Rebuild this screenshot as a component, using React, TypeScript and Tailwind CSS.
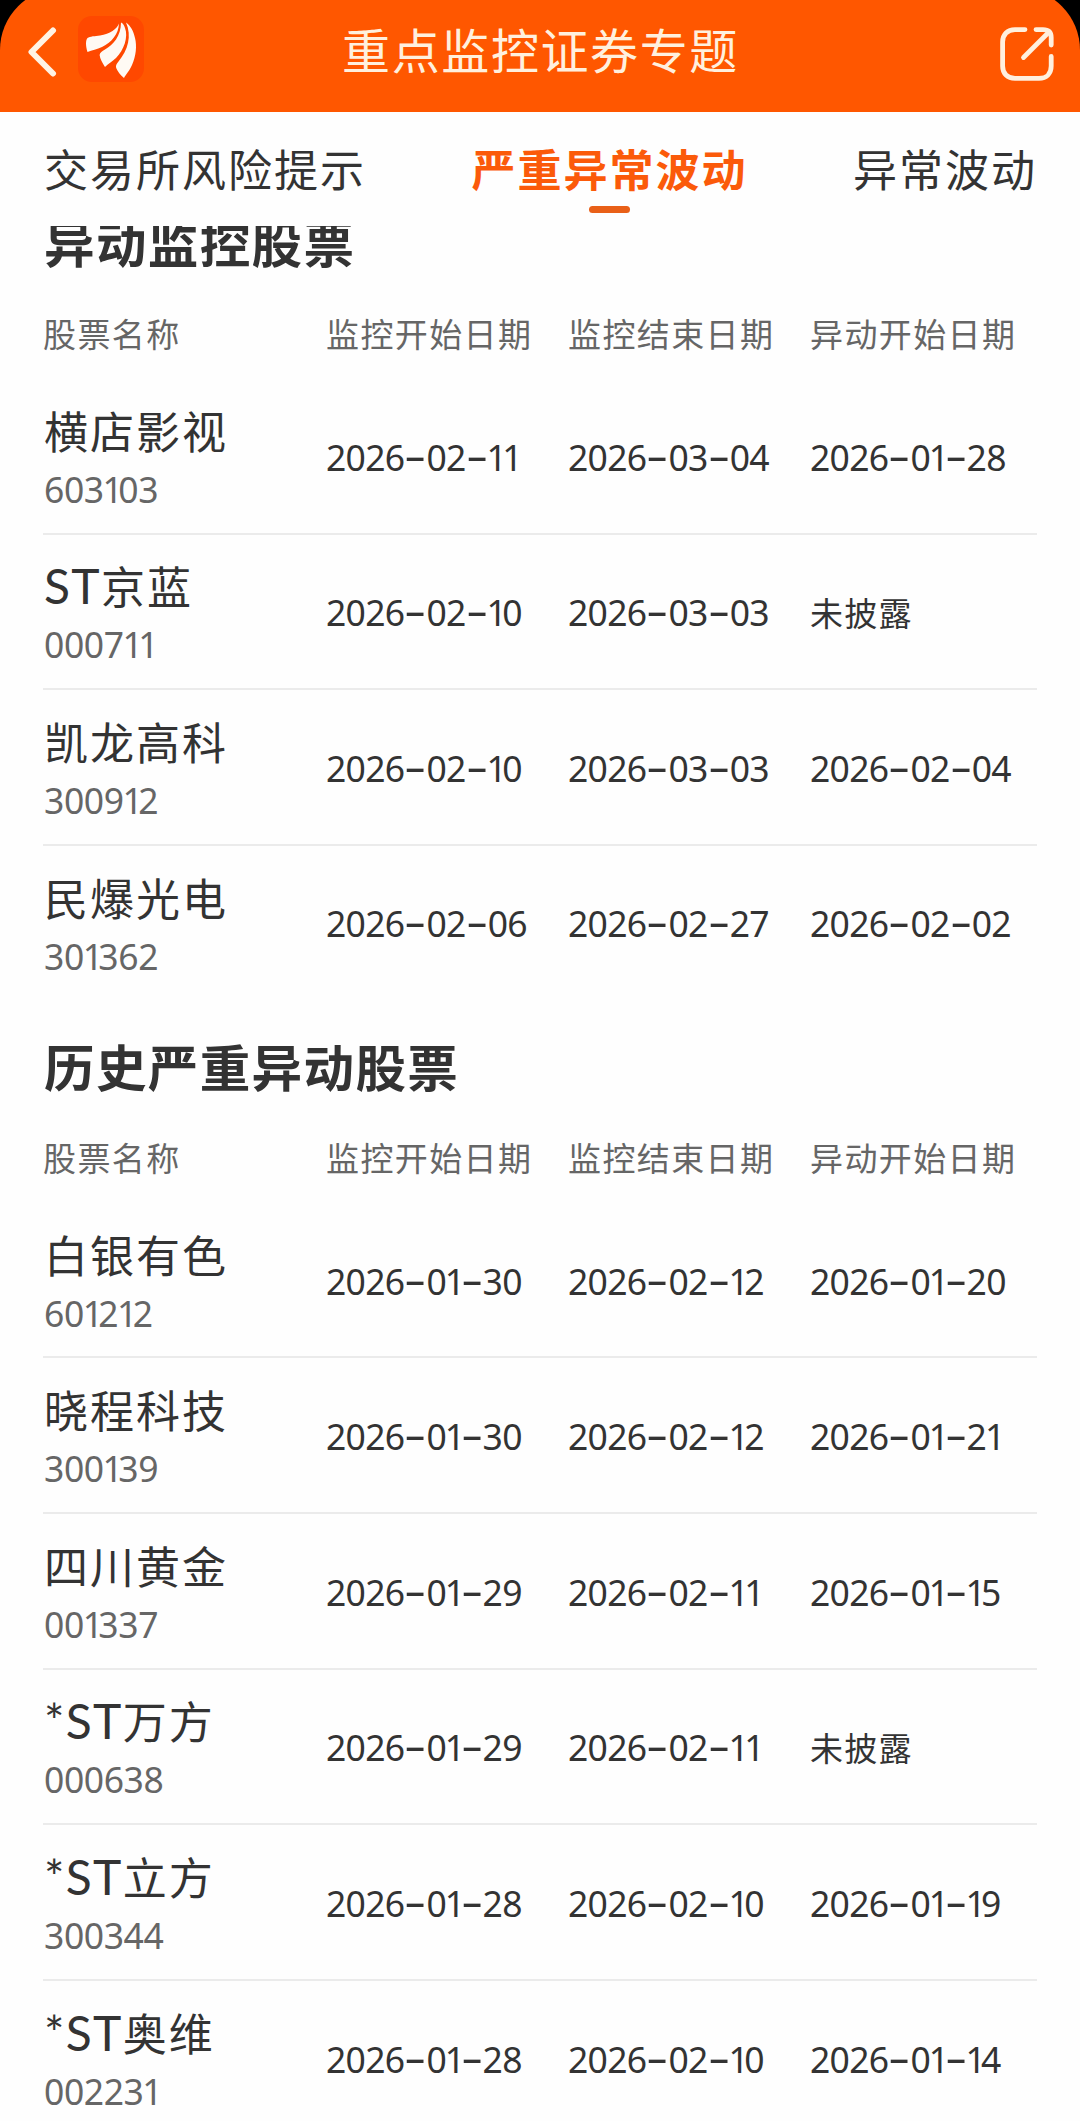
import React, { useState } from 'react';

interface Stock {
    name: string;
    code: string;
    monitorStart: string;
    monitorEnd: string;
    abnormalStart: string;
}

interface StockSectionProps {
    title: string;
    stocks: Stock[];
}

const TABS = ['交易所风险提示', '严重异常波动', '异常波动'];

const COLUMNS = ['股票名称', '监控开始日期', '监控结束日期', '异动开始日期'];

const MONITORED: Stock[] = [
    { name: '横店影视', code: '603103', monitorStart: '2026-02-11', monitorEnd: '2026-03-04', abnormalStart: '2026-01-28' },
    { name: 'ST京蓝', code: '000711', monitorStart: '2026-02-10', monitorEnd: '2026-03-03', abnormalStart: '未披露' },
    { name: '凯龙高科', code: '300912', monitorStart: '2026-02-10', monitorEnd: '2026-03-03', abnormalStart: '2026-02-04' },
    { name: '民爆光电', code: '301362', monitorStart: '2026-02-06', monitorEnd: '2026-02-27', abnormalStart: '2026-02-02' },
];

const HISTORY: Stock[] = [
    { name: '白银有色', code: '601212', monitorStart: '2026-01-30', monitorEnd: '2026-02-12', abnormalStart: '2026-01-20' },
    { name: '晓程科技', code: '300139', monitorStart: '2026-01-30', monitorEnd: '2026-02-12', abnormalStart: '2026-01-21' },
    { name: '四川黄金', code: '001337', monitorStart: '2026-01-29', monitorEnd: '2026-02-11', abnormalStart: '2026-01-15' },
    { name: '*ST万方', code: '000638', monitorStart: '2026-01-29', monitorEnd: '2026-02-11', abnormalStart: '未披露' },
    { name: '*ST立方', code: '300344', monitorStart: '2026-01-28', monitorEnd: '2026-02-10', abnormalStart: '2026-01-19' },
    { name: '*ST奥维', code: '002231', monitorStart: '2026-01-28', monitorEnd: '2026-02-10', abnormalStart: '2026-01-14' },
];

const BackIcon: React.FC = () => (
    <svg className="h-[56px] w-[30px]" viewBox="0 0 30 56" fill="none" stroke="#fff3e4" strokeWidth="6" strokeLinecap="round" strokeLinejoin="round">
        <path d="M26 6.500 L4.500 28 L26 49.500" />
    </svg>
);

const BrandLogo: React.FC = () => (
    <svg className="h-[66px] w-[66px]" viewBox="0 0 66 66">
        <rect width="66" height="66" rx="14" fill="#ff4800" />
        <g fill="#fffaf4">
            <path d="M41 7.500 C39 13 32 18 22 19.500 C17 20.200 12 20.300 9.500 22 C7.500 24 7.600 30 9.500 36 C14 34 19 33.500 24 31 C34 26 40.500 18 41 7.500 Z" />
            <path d="M43 6.500 C43 20 35 29 27 33.500 C24 35 22 36.500 21.600 39 C22 43 24.500 47 27 51 C30 47.500 34 46 38 42 C46 34 50.500 21 47 12 C46 9 45 7.500 43 6.500 Z" />
            <path d="M48 6.500 C54 20 50 34 40.500 45.500 C38.500 48 37.500 49.500 38.200 52 C39.500 55.500 42.500 59 46 62 C48 58 51.500 55 54 49 C58 40 59 30 57 22 C55.500 15 52.500 9.500 48 6.500 Z" />
        </g>
    </svg>
);

const ShareIcon: React.FC = () => (
    <svg className="h-[56px] w-[56px]" viewBox="0 0 56 56" fill="none" stroke="#fff0de" strokeWidth="4.800" strokeLinecap="round" strokeLinejoin="round">
        <path d="M26 3.600 H16 C8.500 3.600 3.600 8.500 3.600 16 V40 C3.600 47.500 8.500 52.400 16 52.400 H40 C47.500 52.400 52.200 47.500 52.200 40 V30.500" />
        <path d="M37 3.600 H44 C49.500 3.600 52.200 6.300 52.200 11.500 V19" />
        <path d="M24.500 31.500 L49.500 6.500" />
    </svg>
);

// Tightens the narrow "1" and widens the hyphen so that dates keep an even rhythm
const Digits: React.FC<{ value: string }> = ({ value }) => (
    <>
        {value.split(/(1+|-)/).filter(Boolean).map((part, i) => {
            if (part[0] === '1') return <span key={i} className="-ml-[1.200px] tracking-[-4.600px]">{part}</span>;
            if (part === '-') {
                return <span key={i} className="inline-block w-[22px] -translate-y-[2px] scale-x-[1.900] text-center font-medium tracking-normal">-</span>;
            }
            return <span key={i}>{part}</span>;
        })}
    </>
);

const StockName: React.FC<{ name: string }> = ({ name }) => {
    const prefix = name.match(/^[*A-Z]+/)?.[0] ?? '';
    return (
        <div className="h-[56px] pl-px text-[44px] leading-[56px] tracking-[2px] whitespace-nowrap text-[#333333]">
            {prefix && <span className="font-['Lato'] text-[48px] tracking-[1.300px]">{prefix}</span>}
            {name.slice(prefix.length)}
        </div>
    );
};

const DateCell: React.FC<{ value: string }> = ({ value }) => {
    const isDate = /^\d/.test(value);
    return isDate ? (
        <div className="pt-[3px] font-['Noto_Sans'] text-[35.500px] tracking-[-0.700px] whitespace-nowrap text-[#333333]">
            <Digits value={value} />
        </div>
    ) : (
        <div className="pt-[2px] text-[33px] tracking-[1.300px] text-[#333333]">{value}</div>
    );
};

const StockSection: React.FC<StockSectionProps> = ({ title, stocks }) => (
    <section className="px-[43px]">
        <h2 className="h-[48px] pl-px text-[50.500px] leading-[48px] font-bold tracking-[1.400px] text-[#333333]">{title}</h2>
        <div className="mt-[44px] grid h-[48px] grid-cols-[283px_242px_242px_1fr] text-[33px] leading-[48px] tracking-[1.400px] whitespace-nowrap text-[#666666]">
            {COLUMNS.map(column => <div key={column}>{column}</div>)}
        </div>
        <div className="mt-[22px]">
            {stocks.map((stock, i) => (
                <div
                    key={stock.code}
                    className={`grid h-[155.600px] grid-cols-[283px_242px_242px_1fr] items-center border-b-2 ${i < stocks.length - 1 ? 'border-[#ebebeb]' : 'border-transparent'}`}
                >
                    <div className="pb-px">
                        <StockName name={stock.name} />
                        <div className="mt-[11px] h-[40px] pl-px font-['Noto_Sans'] text-[35.500px] leading-[40px] tracking-[-0.400px] text-[#666666]">
                            <Digits value={stock.code} />
                        </div>
                    </div>
                    <DateCell value={stock.monitorStart} />
                    <DateCell value={stock.monitorEnd} />
                    <DateCell value={stock.abnormalStart} />
                </div>
            ))}
        </div>
    </section>
);

const App: React.FC = () => {
    const [activeTab, setActiveTab] = useState(TABS[1]);

    return (
        <div className="flex h-[2121px] w-[1080px] flex-col overflow-hidden bg-[#fefefe] font-['Noto_Sans_CJK_SC',sans-serif]">
            <header className="h-[112px] shrink-0 overflow-hidden bg-black">
                <div className="-mt-[12px] grid h-[124px] grid-cols-[1fr_auto_1fr] items-start rounded-t-[62px] bg-[#ff5700] pt-[12px]">
                    <div className="flex pl-[26.500px]">
                        <button className="mt-[21px]"><BackIcon /></button>
                        <div className="mt-[16px] ml-[21px]"><BrandLogo /></div>
                    </div>
                    <h1 className="mt-[18px] pl-px text-[48px] leading-[60px] tracking-[1.600px] text-[#fff0de]">重点监控证券专题</h1>
                    <div className="flex justify-end pr-[25px]">
                        <button className="mt-[26px]"><ShareIcon /></button>
                    </div>
                </div>
            </header>

            <nav className="flex h-[114px] shrink-0 justify-between pr-[43px] pl-[44px]">
                {TABS.map(tab => (
                    <button
                        key={tab}
                        onClick={() => setActiveTab(tab)}
                        className={`flex flex-col items-center pt-[26px] text-[44px] leading-[60px] tracking-[2px] ${tab === activeTab ? 'font-bold text-[#fb5a0a]' : 'text-[#333333]'}`}
                    >
                        {tab}
                        {tab === activeTab && <span className="mt-[8px] h-[7px] w-[41px] rounded-full bg-[#e96018]" />}
                    </button>
                ))}
            </nav>

            <main className="min-h-0 flex-1 overflow-hidden">
                <div className="-mt-[9px] flex flex-col gap-[39.500px]">
                    <StockSection title="异动监控股票" stocks={MONITORED} />
                    <StockSection title="历史严重异动股票" stocks={HISTORY} />
                </div>
            </main>
        </div>
    );
};

export default App;
